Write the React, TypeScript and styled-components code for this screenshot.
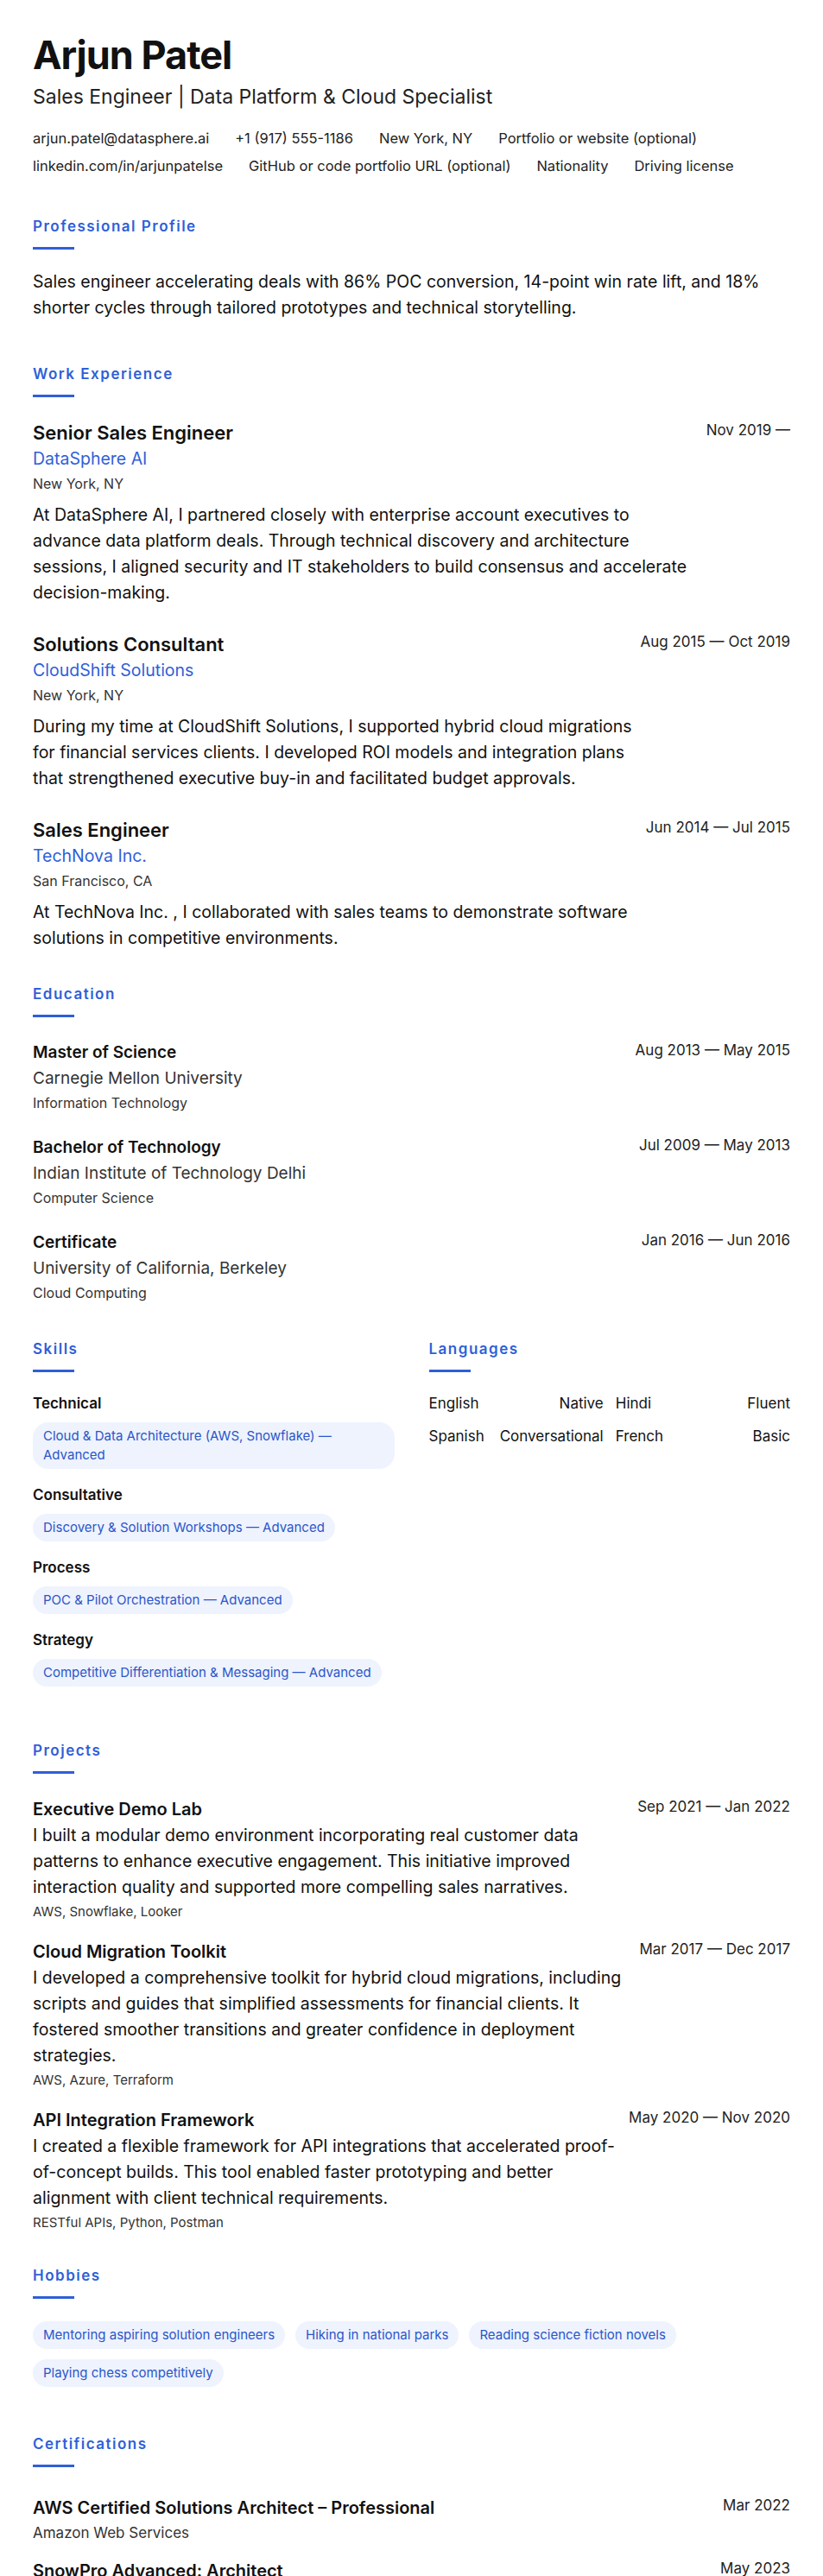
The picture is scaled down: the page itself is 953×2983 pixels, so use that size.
import React from "react";
import styled, { createGlobalStyle } from "styled-components";

const Global = createGlobalStyle`
  body { margin: 0; background: #fff; font-family: Inter, "Noto Sans", sans-serif; color: #111; }
  * { box-sizing: border-box; }
`;

const BLUE = "#2f5fd8";

const Page = styled.div`
  padding: 38px 38px 60px;
`;

const Name = styled.h1`
  font-size: 45px;
  font-weight: 700;
  letter-spacing: -1px;
  margin: 0;
  line-height: 52px;
`;

const Headline = styled.div`
  font-size: 23px;
  color: #222;
  margin-top: 8px;
`;

const Contacts = styled.div`
  display: flex;
  flex-wrap: wrap;
  column-gap: 30px;
  row-gap: 12px;
  margin-top: 24px;
  font-size: 16.5px;
  color: #222;
`;

const Section = styled.section<{ $top?: number }>`
  margin-top: ${(p) => p.$top ?? 52}px;
`;

const SectionTitle = styled.h2`
  margin: 0;
  font-size: 17px;
  font-weight: 600;
  letter-spacing: 1.5px;
  color: ${BLUE};
  &::after {
    content: "";
    display: block;
    width: 48px;
    height: 3px;
    background: ${BLUE};
    margin-top: 14px;
  }
`;

const Body = styled.div<{ $top?: number }>`
  margin-top: ${(p) => p.$top ?? 22}px;
`;

const Para = styled.p`
  margin: 0;
  font-size: 19.5px;
  line-height: 30px;
`;

const Entry = styled.div<{ $gap?: number }>`
  display: flex;
  justify-content: space-between;
  align-items: flex-start;
  margin-bottom: ${(p) => p.$gap ?? 30}px;
`;

const EntryMain = styled.div`
  display: flex;
  flex-direction: column;
`;

const Date = styled.div`
  font-size: 17px;
  color: #222;
  white-space: nowrap;
  padding-top: 2px;
`;

const Role = styled.div<{ $size?: number }>`
  font-size: ${(p) => p.$size ?? 22}px;
  font-weight: 600;
  line-height: 30px;
`;

const Company = styled.div`
  font-size: 19.5px;
  color: ${BLUE};
  line-height: 30px;
`;

const Sub = styled.div<{ $size?: number }>`
  font-size: ${(p) => p.$size ?? 16}px;
  color: #333;
  line-height: 29px;
`;

const Desc = styled.p<{ $top?: number }>`
  margin: ${(p) => p.$top ?? 6}px 0 0;
  font-size: 19.5px;
  line-height: 30px;
  max-width: 775px;
`;

const Columns = styled.div`
  display: grid;
  grid-template-columns: 1fr 1fr;
  gap: 40px;
`;

const SkillGroup = styled.div`
  margin-bottom: 20px;
`;

const SkillLabel = styled.div`
  font-size: 17px;
  font-weight: 600;
  margin-bottom: 12px;
`;

const Chips = styled.div`
  display: flex;
  flex-wrap: wrap;
  gap: 12px 12px;
`;

const Chip = styled.span`
  display: inline-block;
  background: #eef3fe;
  color: #2b56c9;
  font-size: 15px;
  line-height: 22px;
  padding: 5px 12px;
  border-radius: 18px;
`;

const LangGrid = styled.div`
  display: grid;
  grid-template-columns: 1fr 1fr;
  column-gap: 14px;
  row-gap: 18px;
  font-size: 17px;
`;

const LangCell = styled.div`
  display: flex;
  justify-content: space-between;
`;

const Tech = styled.div`
  font-size: 15px;
  color: #333;
  margin-top: 4px;
`;

const jobs = [
  {
    role: "Senior Sales Engineer",
    company: "DataSphere AI",
    loc: "New York, NY",
    date: "Nov 2019 —",
    desc: "At DataSphere AI, I partnered closely with enterprise account executives to advance data platform deals. Through technical discovery and architecture sessions, I aligned security and IT stakeholders to build consensus and accelerate decision-making.",
  },
  {
    role: "Solutions Consultant",
    company: "CloudShift Solutions",
    loc: "New York, NY",
    date: "Aug 2015 — Oct 2019",
    desc: "During my time at CloudShift Solutions, I supported hybrid cloud migrations for financial services clients. I developed ROI models and integration plans that strengthened executive buy-in and facilitated budget approvals.",
  },
  {
    role: "Sales Engineer",
    company: "TechNova Inc.",
    loc: "San Francisco, CA",
    date: "Jun 2014 — Jul 2015",
    desc: "At TechNova Inc. , I collaborated with sales teams to demonstrate software solutions in competitive environments.",
  },
];

const edu = [
  { deg: "Master of Science", school: "Carnegie Mellon University", field: "Information Technology", date: "Aug 2013 — May 2015" },
  { deg: "Bachelor of Technology", school: "Indian Institute of Technology Delhi", field: "Computer Science", date: "Jul 2009 — May 2013" },
  { deg: "Certificate", school: "University of California, Berkeley", field: "Cloud Computing", date: "Jan 2016 — Jun 2016" },
];

const skills = [
  { label: "Technical", item: "Cloud & Data Architecture (AWS, Snowflake) — Advanced" },
  { label: "Consultative", item: "Discovery & Solution Workshops — Advanced" },
  { label: "Process", item: "POC & Pilot Orchestration — Advanced" },
  { label: "Strategy", item: "Competitive Differentiation & Messaging — Advanced" },
];

const langs = [
  ["English", "Native"],
  ["Hindi", "Fluent"],
  ["Spanish", "Conversational"],
  ["French", "Basic"],
];

const projects = [
  {
    name: "Executive Demo Lab",
    date: "Sep 2021 — Jan 2022",
    desc: "I built a modular demo environment incorporating real customer data patterns to enhance executive engagement. This initiative improved interaction quality and supported more compelling sales narratives.",
    tech: "AWS, Snowflake, Looker",
  },
  {
    name: "Cloud Migration Toolkit",
    date: "Mar 2017 — Dec 2017",
    desc: "I developed a comprehensive toolkit for hybrid cloud migrations, including scripts and guides that simplified assessments for financial clients. It fostered smoother transitions and greater confidence in deployment strategies.",
    tech: "AWS, Azure, Terraform",
  },
  {
    name: "API Integration Framework",
    date: "May 2020 — Nov 2020",
    desc: "I created a flexible framework for API integrations that accelerated proof-of-concept builds. This tool enabled faster prototyping and better alignment with client technical requirements.",
    tech: "RESTful APIs, Python, Postman",
  },
];

const hobbies = [
  "Mentoring aspiring solution engineers",
  "Hiking in national parks",
  "Reading science fiction novels",
  "Playing chess competitively",
];

const certs = [
  { name: "AWS Certified Solutions Architect – Professional", org: "Amazon Web Services", date: "Mar 2022" },
  { name: "SnowPro Advanced: Architect", org: "Snowflake", date: "May 2023" },
];

export default function App() {
  return (
    <Page>
      <Global />
      <Name>Arjun Patel</Name>
      <Headline>Sales Engineer | Data Platform &amp; Cloud Specialist</Headline>
      <Contacts>
        <span>arjun.patel@datasphere.ai</span>
        <span>+1 (917) 555-1186</span>
        <span>New York, NY</span>
        <span>Portfolio or website (optional)</span>
        <span>linkedin.com/in/arjunpatelse</span>
        <span>GitHub or code portfolio URL (optional)</span>
        <span>Nationality</span>
        <span>Driving license</span>
      </Contacts>

      <Section $top={50}>
        <SectionTitle>Professional Profile</SectionTitle>
        <Body>
          <Para>
            Sales engineer accelerating deals with 86% POC conversion, 14-point win rate lift, and 18% shorter cycles
            through tailored prototypes and technical storytelling.
          </Para>
        </Body>
      </Section>

      <Section>
        <SectionTitle>Work Experience</SectionTitle>
        <Body $top={26}>
          {jobs.map((j) => (
            <Entry key={j.role}>
              <EntryMain>
                <Role>{j.role}</Role>
                <Company>{j.company}</Company>
                <Sub>{j.loc}</Sub>
                <Desc>{j.desc}</Desc>
              </EntryMain>
              <Date>{j.date}</Date>
            </Entry>
          ))}
        </Body>
      </Section>

      <Section $top={40}>
        <SectionTitle>Education</SectionTitle>
        <Body $top={26}>
          {edu.map((e) => (
            <Entry key={e.deg} $gap={22}>
              <EntryMain>
                <Role $size={19}>{e.deg}</Role>
                <Sub $size={19}>{e.school}</Sub>
                <Sub>{e.field}</Sub>
              </EntryMain>
              <Date>{e.date}</Date>
            </Entry>
          ))}
        </Body>
      </Section>

      <Section $top={40}>
        <Columns>
          <div>
            <SectionTitle>Skills</SectionTitle>
            <Body $top={26}>
              {skills.map((s) => (
                <SkillGroup key={s.label}>
                  <SkillLabel>{s.label}</SkillLabel>
                  <Chips>
                    <Chip>{s.item}</Chip>
                  </Chips>
                </SkillGroup>
              ))}
            </Body>
          </div>
          <div>
            <SectionTitle>Languages</SectionTitle>
            <Body $top={26}>
              <LangGrid>
                {langs.map(([n, l]) => (
                  <LangCell key={n}>
                    <span>{n}</span>
                    <span>{l}</span>
                  </LangCell>
                ))}
              </LangGrid>
            </Body>
          </div>
        </Columns>
      </Section>

      <Section $top={44}>
        <SectionTitle>Projects</SectionTitle>
        <Body $top={26}>
          {projects.map((p) => (
            <Entry key={p.name} $gap={22}>
              <EntryMain>
                <Role $size={20}>{p.name}</Role>
                <Desc $top={0}>{p.desc}</Desc>
                <Tech>{p.tech}</Tech>
              </EntryMain>
              <Date>{p.date}</Date>
            </Entry>
          ))}
        </Body>
      </Section>

      <Section $top={42}>
        <SectionTitle>Hobbies</SectionTitle>
        <Body $top={26}>
          <Chips>
            {hobbies.map((h) => (
              <Chip key={h}>{h}</Chip>
            ))}
          </Chips>
        </Body>
      </Section>

      <Section $top={56}>
        <SectionTitle>Certifications</SectionTitle>
        <Body $top={32}>
          {certs.map((c) => (
            <Entry key={c.name} $gap={14}>
              <EntryMain>
                <Role $size={20}>{c.name}</Role>
                <Sub $size={17}>{c.org}</Sub>
              </EntryMain>
              <Date>{c.date}</Date>
            </Entry>
          ))}
        </Body>
      </Section>
    </Page>
  );
}
